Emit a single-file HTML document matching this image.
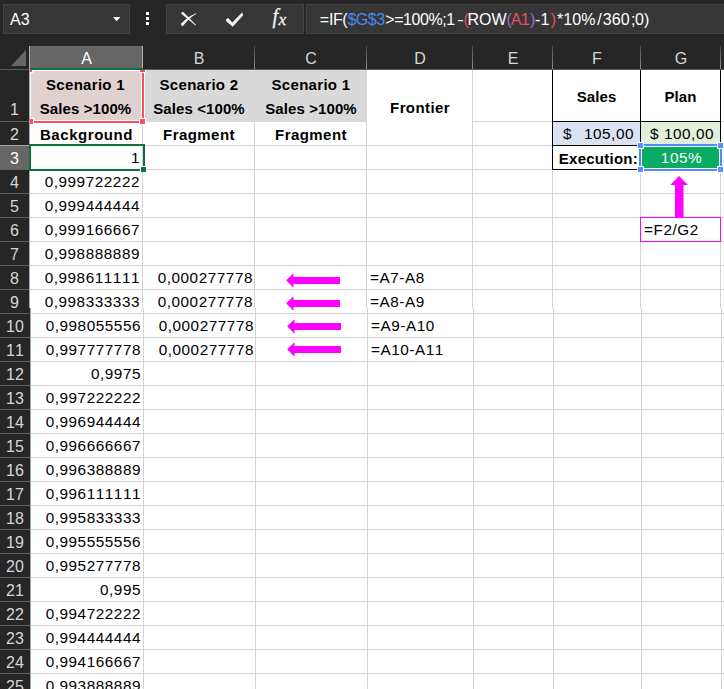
<!DOCTYPE html>
<html><head><meta charset="utf-8"><title>Sheet</title>
<style>
html,body{margin:0;padding:0;}
body{width:724px;height:689px;overflow:hidden;background:#fff;position:relative;font-family:"Liberation Sans",sans-serif;font-kerning:none;}
.abs{position:absolute;}
#top{left:0;top:0;width:724px;height:70px;background:#262626;}
.box{position:absolute;top:4px;height:28px;background:#363636;border:1px solid #444;}
.ui{color:#fff;font-size:16px;line-height:30px;white-space:nowrap;}
.ch{position:absolute;top:46px;height:23px;color:#d6d6d6;font-size:16px;line-height:26px;text-align:center;box-sizing:border-box;}
.chd{position:absolute;top:46px;height:23px;width:1px;background:linear-gradient(#4c4c4c,#8e8e94);}
.rh{position:absolute;left:0;width:28px;color:#d6d6d6;font-size:16px;text-align:center;box-sizing:border-box;border-bottom:1px solid #5e5e5e;height:24px;line-height:25px;}
.gl{position:absolute;background:#d4d4d4;}
.c{position:absolute;font-size:15.3px;letter-spacing:0.55px;color:#000;white-space:nowrap;height:24px;line-height:24px;}
.r{text-align:right;}
.b{font-weight:bold;text-align:center;letter-spacing:0.1px;font-size:15px;margin-top:1px;}
</style></head><body>

<div class="gl" style="left:30px;top:121px;width:694px;height:1px;"></div>
<div class="gl" style="left:30px;top:145px;width:694px;height:1px;"></div>
<div class="gl" style="left:30px;top:169px;width:694px;height:1px;"></div>
<div class="gl" style="left:30px;top:193px;width:694px;height:1px;"></div>
<div class="gl" style="left:30px;top:217px;width:694px;height:1px;"></div>
<div class="gl" style="left:30px;top:241px;width:694px;height:1px;"></div>
<div class="gl" style="left:30px;top:265px;width:694px;height:1px;"></div>
<div class="gl" style="left:30px;top:289px;width:694px;height:1px;"></div>
<div class="gl" style="left:30px;top:313px;width:694px;height:1px;"></div>
<div class="gl" style="left:30px;top:337px;width:694px;height:1px;"></div>
<div class="gl" style="left:30px;top:361px;width:694px;height:1px;"></div>
<div class="gl" style="left:30px;top:385px;width:694px;height:1px;"></div>
<div class="gl" style="left:30px;top:409px;width:694px;height:1px;"></div>
<div class="gl" style="left:30px;top:433px;width:694px;height:1px;"></div>
<div class="gl" style="left:30px;top:457px;width:694px;height:1px;"></div>
<div class="gl" style="left:30px;top:481px;width:694px;height:1px;"></div>
<div class="gl" style="left:30px;top:505px;width:694px;height:1px;"></div>
<div class="gl" style="left:30px;top:529px;width:694px;height:1px;"></div>
<div class="gl" style="left:30px;top:553px;width:694px;height:1px;"></div>
<div class="gl" style="left:30px;top:577px;width:694px;height:1px;"></div>
<div class="gl" style="left:30px;top:601px;width:694px;height:1px;"></div>
<div class="gl" style="left:30px;top:625px;width:694px;height:1px;"></div>
<div class="gl" style="left:30px;top:649px;width:694px;height:1px;"></div>
<div class="gl" style="left:30px;top:673px;width:694px;height:1px;"></div>
<div class="gl" style="left:142px;top:70px;width:1px;height:238px;"></div>
<div class="gl" style="left:143px;top:308px;width:1px;height:381px;"></div>
<div class="gl" style="left:254px;top:70px;width:1px;height:238px;"></div>
<div class="gl" style="left:255px;top:308px;width:1px;height:381px;"></div>
<div class="gl" style="left:366px;top:70px;width:1px;height:238px;"></div>
<div class="gl" style="left:367px;top:308px;width:1px;height:381px;"></div>
<div class="gl" style="left:472px;top:70px;width:1px;height:238px;"></div>
<div class="gl" style="left:473px;top:308px;width:1px;height:381px;"></div>
<div class="gl" style="left:552px;top:70px;width:1px;height:238px;"></div>
<div class="gl" style="left:553px;top:308px;width:1px;height:381px;"></div>
<div class="gl" style="left:640px;top:70px;width:1px;height:238px;"></div>
<div class="gl" style="left:641px;top:308px;width:1px;height:381px;"></div>
<div class="gl" style="left:720px;top:70px;width:1px;height:238px;"></div>
<div class="gl" style="left:721px;top:308px;width:1px;height:381px;"></div>
<div class="abs" style="left:31px;top:71px;width:110px;height:49px;background:#e0d1d1;"></div>
<div class="abs" style="left:144px;top:70px;width:223px;height:52px;background:#d9d9d9;"></div>
<div class="abs" style="left:553px;top:122px;width:87px;height:23px;background:#d9e1f2;"></div>
<div class="abs" style="left:641px;top:122px;width:79px;height:23px;background:#e2efda;"></div>
<div class="abs" style="left:552px;top:70px;width:1px;height:100px;background:#000;"></div>
<div class="abs" style="left:640px;top:70px;width:1px;height:100px;background:#000;"></div>
<div class="abs" style="left:720px;top:70px;width:1px;height:100px;background:#000;"></div>
<div class="abs" style="left:552px;top:121px;width:169px;height:1px;background:#000;"></div>
<div class="abs" style="left:552px;top:145px;width:169px;height:1px;background:#000;"></div>
<div class="abs" style="left:552px;top:169px;width:169px;height:1px;background:#000;"></div>
<div class="abs" style="left:639px;top:144px;width:83px;height:27px;background:#4f8bff;"></div>
<div class="abs" style="left:641px;top:146px;width:79px;height:23px;background:#fff;"></div>
<div class="abs" style="left:642px;top:147px;width:77px;height:21px;background:#09ac60;"></div>
<div class="abs" style="left:637px;top:142px;width:7px;height:7px;background:#fff;"></div>
<div class="abs" style="left:638px;top:143px;width:5px;height:5px;background:#5a92ff;"></div>
<div class="abs" style="left:717px;top:142px;width:7px;height:7px;background:#fff;"></div>
<div class="abs" style="left:718px;top:143px;width:5px;height:5px;background:#5a92ff;"></div>
<div class="abs" style="left:637px;top:166px;width:7px;height:7px;background:#fff;"></div>
<div class="abs" style="left:638px;top:167px;width:5px;height:5px;background:#5a92ff;"></div>
<div class="abs" style="left:717px;top:166px;width:7px;height:7px;background:#fff;"></div>
<div class="abs" style="left:718px;top:167px;width:5px;height:5px;background:#5a92ff;"></div>
<div class="c r" style="left:30px;top:146px;width:110px;">1</div>
<div class="c r" style="left:30px;top:170px;width:110px;">0,999722222</div>
<div class="c r" style="left:30px;top:194px;width:110px;">0,999444444</div>
<div class="c r" style="left:30px;top:218px;width:110px;">0,999166667</div>
<div class="c r" style="left:30px;top:242px;width:110px;">0,998888889</div>
<div class="c r" style="left:30px;top:266px;width:110px;">0,998611111</div>
<div class="c r" style="left:30px;top:290px;width:110px;">0,998333333</div>
<div class="c r" style="left:31px;top:314px;width:110px;">0,998055556</div>
<div class="c r" style="left:31px;top:338px;width:110px;">0,997777778</div>
<div class="c r" style="left:31px;top:362px;width:110px;">0,9975</div>
<div class="c r" style="left:31px;top:386px;width:110px;">0,997222222</div>
<div class="c r" style="left:31px;top:410px;width:110px;">0,996944444</div>
<div class="c r" style="left:31px;top:434px;width:110px;">0,996666667</div>
<div class="c r" style="left:31px;top:458px;width:110px;">0,996388889</div>
<div class="c r" style="left:31px;top:482px;width:110px;">0,996111111</div>
<div class="c r" style="left:31px;top:506px;width:110px;">0,995833333</div>
<div class="c r" style="left:31px;top:530px;width:110px;">0,995555556</div>
<div class="c r" style="left:31px;top:554px;width:110px;">0,995277778</div>
<div class="c r" style="left:31px;top:578px;width:110px;">0,995</div>
<div class="c r" style="left:31px;top:602px;width:110px;">0,994722222</div>
<div class="c r" style="left:31px;top:626px;width:110px;">0,994444444</div>
<div class="c r" style="left:31px;top:650px;width:110px;">0,994166667</div>
<div class="c r" style="left:31px;top:674px;width:110px;">0,993888889</div>
<div class="c r" style="left:143px;top:266px;width:110px;">0,000277778</div>
<div class="c r" style="left:143px;top:290px;width:110px;">0,000277778</div>
<div class="c r" style="left:144px;top:314px;width:110px;">0,000277778</div>
<div class="c r" style="left:144px;top:338px;width:110px;">0,000277778</div>
<div class="c " style="left:370px;top:266px;width:100px;">=A7-A8</div>
<div class="c " style="left:370px;top:290px;width:100px;">=A8-A9</div>
<div class="c " style="left:371px;top:314px;width:100px;">=A9-A10</div>
<div class="c " style="left:371px;top:338px;width:100px;">=A10-A11</div>
<div class="c b" style="left:30px;top:122px;width:113px;letter-spacing:0.55px;">Background</div>
<div class="c b" style="left:143px;top:122px;width:112px;letter-spacing:0.45px;">Fragment</div>
<div class="c b" style="left:255px;top:122px;width:112px;letter-spacing:0.45px;">Fragment</div>
<div class="c b" style="left:29px;top:72px;width:113px;height:48px;"><span style="letter-spacing:0.3px">Scenario 1</span><br>Sales &gt;100%</div>
<div class="c b" style="left:143px;top:72px;width:112px;height:48px;"><span style="letter-spacing:0.3px">Scenario 2</span><br>Sales &lt;100%</div>
<div class="c b" style="left:255px;top:72px;width:112px;height:48px;"><span style="letter-spacing:0.3px">Scenario 1</span><br>Sales &gt;100%</div>
<div class="abs" style="left:367px;top:121px;width:105px;height:1px;background:#fff;"></div>
<div class="c b" style="left:367px;top:95px;width:106px;letter-spacing:0.4px;">Frontier</div>
<div class="c b" style="left:553px;top:84px;width:87px;">Sales</div>
<div class="c b" style="left:641px;top:84px;width:79px;">Plan</div>
<div class="c" style="left:563px;top:122px;">$</div><div class="c r" style="left:553px;top:122px;width:81px;">105,00</div>
<div class="c r" style="left:641px;top:122px;width:73px;">$ 100,00</div>
<div class="c b" style="left:553px;top:146px;width:85px;text-align:right;letter-spacing:0.25px;">Execution:</div>
<div class="c" style="left:642px;top:146px;width:79px;text-align:center;color:#fff;-webkit-text-stroke:0;">105%</div>
<svg class="abs" style="left:284px;top:266px;" width="60" height="24" viewBox="0 0 60 24"><path d="M2.2 14.2 L9.5 7.3 L9.5 11 L56 11 L56 18 L9.5 18 L9.5 21.7 Z" fill="#ff00ff"/></svg>
<svg class="abs" style="left:284px;top:289px;" width="60" height="24" viewBox="0 0 60 24"><path d="M2.2 14.2 L9.5 7.3 L9.5 11 L56 11 L56 18 L9.5 18 L9.5 21.7 Z" fill="#ff00ff"/></svg>
<svg class="abs" style="left:285px;top:312px;" width="60" height="24" viewBox="0 0 60 24"><path d="M2.2 14.2 L9.5 7.3 L9.5 11 L56 11 L56 18 L9.5 18 L9.5 21.7 Z" fill="#ff00ff"/></svg>
<svg class="abs" style="left:285px;top:335px;" width="60" height="24" viewBox="0 0 60 24"><path d="M2.2 14.2 L9.5 7.3 L9.5 11 L56 11 L56 18 L9.5 18 L9.5 21.7 Z" fill="#ff00ff"/></svg>
<svg class="abs" style="left:664px;top:172px;" width="30" height="48" viewBox="0 0 30 48"><path d="M15 4 L24 13 L19.5 13 L19.5 46 L11 46 L11 13 L6.3 13 Z" fill="#ff00ff"/></svg>
<div class="abs" style="left:640px;top:217px;width:79px;height:23px;border:1px solid #ff00ff;background:#fff;"></div>
<div class="c" style="left:644px;top:218px;">=F2/G2</div>
<div class="abs" style="left:30px;top:70px;width:110px;height:49px;border:1px solid #fff;"></div>
<div class="abs" style="left:28px;top:68px;width:112px;height:51px;border:2px solid #fb4f5f;"></div>
<div class="abs" style="left:144px;top:70px;width:1px;height:52px;background:#fff;"></div>
<div class="abs" style="left:26px;top:66px;width:7px;height:7px;background:#fff;"></div>
<div class="abs" style="left:27px;top:67px;width:5px;height:5px;background:#fb4f5f;"></div>
<div class="abs" style="left:139px;top:66px;width:7px;height:7px;background:#fff;"></div>
<div class="abs" style="left:140px;top:67px;width:5px;height:5px;background:#fb4f5f;"></div>
<div class="abs" style="left:27px;top:118px;width:7px;height:7px;background:#fff;"></div>
<div class="abs" style="left:28px;top:119px;width:5px;height:5px;background:#fb4f5f;"></div>
<div class="abs" style="left:139px;top:118px;width:7px;height:7px;background:#fff;"></div>
<div class="abs" style="left:140px;top:119px;width:5px;height:5px;background:#fb4f5f;"></div>
<div class="abs" style="left:29px;top:144px;width:112px;height:23px;border:2px solid #0f703b;"></div>
<div class="abs" style="left:140px;top:166px;width:6px;height:6px;background:#fff;"></div><div class="abs" style="left:141px;top:167px;width:5px;height:5px;background:#0f703b;"></div>
<div class="abs" style="left:0;top:70px;width:29px;height:238px;background:#262626;border-right:1px solid #a8a8a8;"></div>
<div class="abs" style="left:0;top:308px;width:30px;height:381px;background:#262626;border-right:1px solid #a8a8a8;"></div>
<div class="rh" style="top:70px;height:52px;line-height:79px;width:29px;">1</div>
<div class="rh" style="top:122px;height:24px;width:29px;">2</div>
<div class="rh" style="top:146px;height:24px;background:#666;color:#fff;border-top:1px solid #a8a8a8;top:145px;height:25px;width:29px;">3</div>
<div class="rh" style="top:170px;height:24px;width:29px;">4</div>
<div class="rh" style="top:194px;height:24px;width:29px;">5</div>
<div class="rh" style="top:218px;height:24px;width:29px;">6</div>
<div class="rh" style="top:242px;height:24px;width:29px;">7</div>
<div class="rh" style="top:266px;height:24px;width:29px;">8</div>
<div class="rh" style="top:290px;height:24px;width:29px;">9</div>
<div class="rh" style="top:314px;height:24px;width:30px;">10</div>
<div class="rh" style="top:338px;height:24px;width:30px;">11</div>
<div class="rh" style="top:362px;height:24px;width:30px;">12</div>
<div class="rh" style="top:386px;height:24px;width:30px;">13</div>
<div class="rh" style="top:410px;height:24px;width:30px;">14</div>
<div class="rh" style="top:434px;height:24px;width:30px;">15</div>
<div class="rh" style="top:458px;height:24px;width:30px;">16</div>
<div class="rh" style="top:482px;height:24px;width:30px;">17</div>
<div class="rh" style="top:506px;height:24px;width:30px;">18</div>
<div class="rh" style="top:530px;height:24px;width:30px;">19</div>
<div class="rh" style="top:554px;height:24px;width:30px;">20</div>
<div class="rh" style="top:578px;height:24px;width:30px;">21</div>
<div class="rh" style="top:602px;height:24px;width:30px;">22</div>
<div class="rh" style="top:626px;height:24px;width:30px;">23</div>
<div class="rh" style="top:650px;height:24px;width:30px;">24</div>
<div class="rh" style="top:674px;height:24px;width:30px;">25</div>
<div class="abs" style="left:29px;top:144px;width:2px;height:27px;background:#0f703b;"></div>
<div class="abs" id="top"></div>
<div class="box" style="left:3px;width:125px;"></div>
<div class="abs ui" style="left:10px;top:5px;">A3</div>
<svg class="abs" style="left:112px;top:16px;" width="10" height="6" viewBox="0 0 10 6"><path d="M1 1 L8.4 1 L4.7 5.2 Z" fill="#fff"/></svg>
<div class="abs" style="left:146px;top:12px;width:3px;height:3px;background:#fff;"></div>
<div class="abs" style="left:146px;top:17px;width:3px;height:3px;background:#fff;"></div>
<div class="abs" style="left:146px;top:22px;width:3px;height:3px;background:#fff;"></div>
<div class="box" style="left:166px;width:136px;"></div>
<svg class="abs" style="left:0;top:0;" width="724" height="46" viewBox="0 0 724 46"><path d="M181.6 13.9 L183.3 12.0 L196.1 24.9 L195.5 25.6 Z" fill="#f2f2f2"/><circle cx="182.6" cy="13.1" r="1.2" fill="#f2f2f2"/><path d="M181.3 23.6 Q187.5 16.6 195.9 13.3 L196.2 14.0 Q189.5 17.4 183.4 25.6 Z" fill="#f2f2f2"/><circle cx="182.4" cy="24.5" r="1.4" fill="#f2f2f2"/><path d="M226 19.3 L228.3 18 L232.3 22.4 L242.3 12.2 L243 15.6 L232.7 26.8 L226.2 21.2 Z" fill="#f2f2f2"/><text x="272.4" y="23.3" font-family="Liberation Serif, serif" font-style="italic" font-size="20" fill="#f2f2f2" stroke="#f2f2f2" stroke-width="0.3">f</text><text x="278.6" y="25.3" font-family="Liberation Serif, serif" font-style="italic" font-size="17.5" fill="#f2f2f2" stroke="#f2f2f2" stroke-width="0.3">x</text></svg>
<div class="box" style="left:306px;width:420px;"></div>
<div class="abs ui fs" style="left:319.8px;top:5px;letter-spacing:-0.2px;">=I</div>
<div class="abs ui fs" style="left:333.1px;top:5px;letter-spacing:-0.5px;">F(</div>
<div class="abs ui fs" style="left:347.4px;top:5px;color:#4a8af4;letter-spacing:-0.5px;">$G$3</div>
<div class="abs ui fs" style="left:385.3px;top:5px;letter-spacing:-0.45px;">&gt;=100%;1</div>
<div class="abs ui fs" style="left:456.5px;top:5px;transform:scaleX(1.25);transform-origin:0 0;">-</div>
<div class="abs ui fs" style="left:463.4px;top:5px;color:#e8505b;">(</div>
<div class="abs ui fs" style="left:467.4px;top:5px;">ROW</div>
<div class="abs ui fs" style="left:506.5px;top:5px;color:#9a6bd8;">(</div>
<div class="abs ui fs" style="left:510.8px;top:5px;color:#e8505b;letter-spacing:-0.6px;">A1</div>
<div class="abs ui fs" style="left:530.0px;top:5px;color:#9a6bd8;">)</div>
<div class="abs ui fs" style="left:535.0px;top:5px;letter-spacing:0.2px;">-1</div>
<div class="abs ui fs" style="left:550.7px;top:5px;color:#e8505b;">)</div>
<div class="abs ui fs" style="left:557.0px;top:5px;letter-spacing:0.05px;">*10%</div>
<div class="abs ui fs" style="left:597.2px;top:5px;">/</div>
<div class="abs ui fs" style="left:602.7px;top:5px;letter-spacing:0.15px;">360</div>
<div class="abs ui fs" style="left:630.9px;top:5px;">;</div>
<div class="abs ui fs" style="left:635.1px;top:5px;">0</div>
<div class="abs ui fs" style="left:644.1px;top:5px;">)</div>
<div class="abs" style="left:0;top:69px;width:724px;height:1px;background:#5a5a5a;"></div>
<div class="abs" style="left:29px;top:46px;width:1px;height:24px;background:#b0b0b0;"></div>
<div class="ch" style="left:30px;width:113px;background:#666;color:#fff;">A</div>
<div class="chd" style="left:142px;background:#b4b4b4;"></div>
<div class="ch" style="left:143px;width:112px;">B</div>
<div class="chd" style="left:254px;"></div>
<div class="ch" style="left:255px;width:112px;">C</div>
<div class="chd" style="left:366px;"></div>
<div class="ch" style="left:367px;width:106px;">D</div>
<div class="chd" style="left:472px;"></div>
<div class="ch" style="left:473px;width:80px;">E</div>
<div class="chd" style="left:552px;"></div>
<div class="ch" style="left:553px;width:88px;">F</div>
<div class="chd" style="left:640px;"></div>
<div class="ch" style="left:641px;width:80px;">G</div>
<div class="chd" style="left:720px;"></div>
<div class="abs" style="left:30px;top:68px;width:113px;height:2px;background:#0f703b;"></div>
<svg class="abs" style="left:10px;top:49px;" width="18" height="18" viewBox="0 0 18 18"><path d="M16 1 L16 17 L1 17 Z" fill="#666"/></svg>
</body></html>
